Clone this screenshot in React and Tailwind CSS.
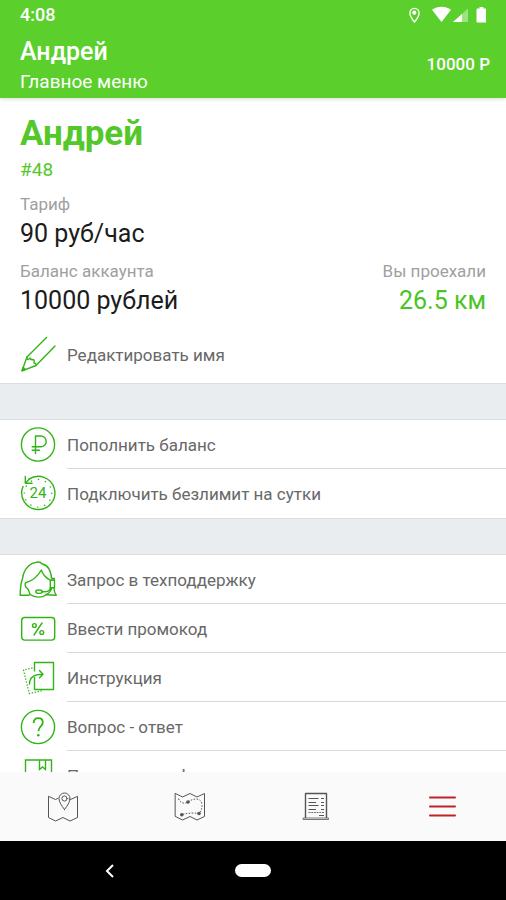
import React from 'react';

function Icon({ children, className = 'h-10 w-10 shrink-0 text-[#31b416]', box = '0 0 40 40' }) {
  return (
    <svg
      viewBox={box}
      className={className}
      fill="none"
      stroke="currentColor"
      strokeWidth="1.4"
      strokeLinecap="round"
      strokeLinejoin="round"
      aria-hidden="true"
    >
      {children}
    </svg>
  );
}

function PencilIcon() {
  return (
    <Icon>
      <path d="M28.500 2.500 9 22 4 35.800 18 30.500 37 11" />
      <path d="M9 22c-.5 2.500 1.500 3.500 3 1 .5 2.500 4 1.500 4 2 .8 1-.5 2.500 0 3 1.500-.3 2 .5 2 2.500" />
      <path d="M4 35.800l1.200-3.400 2.200 2.200z" fill="currentColor" />
    </Icon>
  );
}

function RubleIcon() {
  return (
    <Icon>
      <circle cx="20" cy="19.500" r="16.600" />
      <path d="M17.500 28.500V11h5.300a5.300 5.300 0 0 1 0 10.800H14.200M14.200 25.200h7.300" />
    </Icon>
  );
}

function DayIcon() {
  return (
    <Icon>
      <path d="M11 5.200A16.600 16.600 0 1 1 5 12.500" />
      <path d="M7.300 2.500v6.800h6.800M7.500 9l4.500-4.500" />
      <circle cx="20" cy="19.300" r="13.800" strokeDasharray=".2 7.026" />
      <text
        x="20"
        y="24"
        textAnchor="middle"
        className="fill-current font-[Roboto,sans-serif] text-[15px]"
        stroke="none"
      >
        24
      </text>
    </Icon>
  );
}

function SupportIcon() {
  return (
    <Icon>
      <path d="M11 35.300H2.200C2.200 29 2.800 24 4.300 19.300 5.500 11 8.500 6 14.300 3.300 17 2.800 18 2 20 2c1.800 0 3.300.8 4.300 2 4.500.8 8.400 5.500 9.400 14.700" />
      <path d="M12 34.500c-.8-3-1.500-5-2.700-6.200C7.500 27.500 6.300 24 7.700 22.700 14 21 19 17.500 23.300 10c1.200 4 4 7.500 8.700 10" />
      <path d="M12 34.500c5 3.500 12 3.500 16.300.3l10 .5C36.800 33.500 36 31 36 27.700" />
      <path d="M33.500 18.500h2.800v2M32.300 20.300h4.200v7.400h-4.200z" />
      <path d="M24.300 31.700c5 .5 7.700-.5 8-4M28 34.500c3-1 5-3.500 5.800-6.800" />
      <ellipse cx="21" cy="31.700" rx="3.200" ry="1.700" />
    </Icon>
  );
}

function PromoIcon() {
  return (
    <Icon>
      <rect x="3.700" y="8.500" width="33" height="22.600" rx="3" />
      <circle cx="16.400" cy="16.500" r="1.900" />
      <circle cx="23.800" cy="23.500" r="1.900" />
      <path d="m24 14-8 12" />
    </Icon>
  );
}

function GuideIcon() {
  return (
    <Icon>
      <path d="M16.500 13.500V4.500H35.500V31.500H16.500V19" strokeLinecap="butt" />
      <path d="M11.500 26c0-6 4.500-9.800 13-9.800M21.500 12.500l3.500 3.700-3.500 3.500" />
      <path d="M14 10 5.500 12l5.800 23.500L25 32.500" strokeDasharray=".2 2.800" />
    </Icon>
  );
}

function QuestionIcon() {
  return (
    <Icon>
      <circle cx="20" cy="20" r="16.600" />
      <path
        d="M15.700 16c0-3 1.800-4.800 4.600-4.800s4.500 1.700 4.500 4.300c0 3.800-4.400 4-4.400 8.700"
        strokeWidth="1.800"
        strokeLinecap="butt"
      />
      <circle cx="20.300" cy="28.200" r="1.300" fill="currentColor" stroke="none" />
    </Icon>
  );
}

function PolicyIcon() {
  return (
    <Icon>
      <path d="M7.500 4h26v33h-26zM21.500 4v9.500l3-2.500 3 2.500V4" strokeLinejoin="miter" />
    </Icon>
  );
}

function MapPinIcon() {
  return (
    <Icon box="0 0 32 32" className="h-8 w-8">
      <path
        d="M11 8.300 8.500 9.500 1.500 6.300V27.500L8.500 31l7.500-3.500 7 3.500 7.500-3.500V6.300L23.500 9.500 22 8.800"
        strokeWidth="1"
      />
      <path d="M17.500 19.500c-3-4-5.500-7.500-5.500-11a5.500 5.500 0 0 1 11 0c0 3.500-2.500 7-5.500 11z" strokeWidth="1" />
      <circle cx="17.500" cy="8.500" r="2.600" strokeWidth="1" />
    </Icon>
  );
}

function RouteIcon() {
  return (
    <Icon box="0 0 32 32" className="h-8 w-8">
      <path d="M1.500 3.500 8.500 7l7.500-3.500L23 7l7.500-3.500V26.500L23 30l-7-3.500L8.500 30l-7-3.500z" strokeWidth="1" />
      <path
        d="M4.500 8.500c1.500 5 6 5.500 9.500 3.500 7-5 13.500-3.500 14 2.500.3 4-1 6.500-3 9-4-.5-9-1-17 1"
        strokeDasharray="1.500 1.500"
        strokeWidth="1"
        strokeLinecap="butt"
      />
      <circle cx="14" cy="12" r="1.800" fill="currentColor" stroke="none" />
      <circle cx="25" cy="23.500" r="1.800" fill="currentColor" stroke="none" />
      <circle cx="7.800" cy="24.700" r="1.800" fill="currentColor" stroke="none" />
    </Icon>
  );
}

function ReceiptIcon() {
  return (
    <Icon box="0 0 32 32" className="h-8 w-8">
      <path d="M5.500 28V3.500H26.500V28" strokeLinecap="butt" />
      <path d="M3.500 28h25v1.500h-25z" strokeWidth=".8" />
      <path d="M8.500 8.500h10M21 8.500h3M8.500 12.500h7.500M21 12.500h3M8.500 15.500h10M21 15.500h3M8.500 19.500h7.500M21 19.500h3M19 25.500h5" strokeLinecap="butt" strokeWidth="1" />
      <path d="M8.500 22.500h15.500" strokeDasharray="2 .7" strokeLinecap="butt" strokeWidth=".8" />
    </Icon>
  );
}

function MenuIcon() {
  return (
    <Icon box="0 0 32 32" className="h-8 w-8 text-[#bf2228]">
      <path d="M3 7.500h25M3 16.500h25M3 25.500h25" strokeWidth="2" />
    </Icon>
  );
}

const sections = [
  [
    { icon: RubleIcon, label: 'Пополнить баланс' },
    { icon: DayIcon, label: 'Подключить безлимит на сутки' },
  ],
  [
    { icon: SupportIcon, label: 'Запрос в техподдержку' },
    { icon: PromoIcon, label: 'Ввести промокод' },
    { icon: GuideIcon, label: 'Инструкция' },
    { icon: QuestionIcon, label: 'Вопрос - ответ' },
    { icon: PolicyIcon, label: 'Политика конфиденциальности' },
  ],
];

const tabs = [
  { icon: MapPinIcon, label: 'Карта' },
  { icon: RouteIcon, label: 'Поездки' },
  { icon: ReceiptIcon, label: 'Счета' },
  { icon: MenuIcon, label: 'Меню', active: true },
];

function StatusBar() {
  return (
    <div className="flex h-[30px] items-center justify-between px-5">
      <span className="text-[18px] leading-5 font-medium">4:08</span>
      <svg viewBox="0 0 80 18" className="h-[18px] w-20" fill="currentColor" aria-hidden="true">
        <path
          d="M8.500 16C5.500 12.500 3.900 9.500 3.900 7a4.600 4.600 0 0 1 9.200 0c0 2.500-1.600 5.500-4.600 9z"
          fill="none"
          stroke="currentColor"
          strokeWidth="1.400"
        />
        <circle cx="8.300" cy="6.700" r="2.100" />
        <path d="M26 3.700C31.500-.2 39.500-.2 45 3.700L35.500 16z" />
        <path d="M62 2.500V16H47z" opacity=".4" />
        <path d="M56 7.900V16h-9z" />
        <path d="M73.500 1h4v1.500h2a1 1 0 0 1 1 1V15.500a1 1 0 0 1-1 1h-8a1 1 0 0 1-1-1V3.500a1 1 0 0 1 1-1h2z" />
      </svg>
    </div>
  );
}

function MenuRow({ item, last }) {
  const RowIcon = item.icon;
  return (
    <li>
      <button type="button" className="flex h-[49px] w-full items-center gap-[9px] pl-[18px] text-left">
        <RowIcon />
        <span
          className={`flex h-full flex-1 items-center border-b pt-0.5 text-[17px] leading-6 text-[#686868] ${
            last ? 'border-transparent' : 'border-[#d9d9d9]'
          }`}
        >
          {item.label}
        </span>
      </button>
    </li>
  );
}

export default function App() {
  return (
    <div className="flex h-screen flex-col bg-white font-[Roboto,sans-serif]">
      <header className="z-10 shrink-0 bg-[#5bd02d] text-white shadow-[0_1px_4px_rgba(0,0,0,0.15)]">
        <StatusBar />
        <div className="flex h-[68px] items-center justify-between pr-4 pl-5">
          <div className="pt-1">
            <p className="text-[25px] leading-8 font-medium">Андрей</p>
            <p className="text-[19px] leading-7">Главное меню</p>
          </div>
          <span className="text-[17px] leading-6 font-medium">10000 Р</span>
        </div>
      </header>

      <main className="min-h-0 flex-1 overflow-y-auto [scrollbar-width:none]">
        <section className="px-5 pt-4">
          <h1 className="text-[35px] leading-10 font-bold text-[#54c82a]">Андрей</h1>
          <p className="text-[19px] leading-8 text-[#54c82a]">#48</p>
          <dl className="mt-1">
            <div className="h-[67px]">
              <dt className="text-[17px] leading-7 text-[#a0a0a0]">Тариф</dt>
              <dd className="text-[25px] leading-8 text-[#1c1c1c]">90 руб/час</dd>
            </div>
            <div className="flex h-[67px] justify-between">
              <div>
                <dt className="text-[17px] leading-7 text-[#a0a0a0]">Баланс аккаунта</dt>
                <dd className="text-[25px] leading-8 text-[#1c1c1c]">10000 рублей</dd>
              </div>
              <div className="text-right">
                <dt className="text-[17px] leading-7 text-[#a0a0a0]">Вы проехали</dt>
                <dd className="text-[25px] leading-8 text-[#4ac41f]">26.5 км</dd>
              </div>
            </div>
          </dl>
        </section>
        <button type="button" className="mt-1.5 mb-1 flex h-[49px] w-full items-center gap-[9px] pl-[18px] text-left">
          <PencilIcon />
          <span className="text-[17px] leading-6 text-[#686868]">Редактировать имя</span>
        </button>

        {sections.map((items, i) => (
          <React.Fragment key={i}>
            <div className="h-[37px] border-y border-[#dcdfe1] bg-[#e9edf0]" />
            <ul>
              {items.map((item, n) => (
                <MenuRow key={item.label} item={item} last={n === items.length - 1} />
              ))}
            </ul>
          </React.Fragment>
        ))}
      </main>

      <nav className="grid h-[69px] shrink-0 grid-cols-4 bg-[#fafafa] pb-0.5">
        {tabs.map(({ icon: TabIcon, label, active }) => (
          <button
            key={label}
            type="button"
            aria-label={label}
            aria-current={active ? 'page' : undefined}
            className="flex items-center justify-center text-[#555555]"
          >
            <TabIcon />
          </button>
        ))}
      </nav>

      <div className="grid h-[59px] shrink-0 grid-cols-[1fr_36px_1fr] items-center bg-black text-white">
        <button type="button" aria-label="Назад" className="justify-self-center pr-4">
          <svg viewBox="0 0 16 16" className="h-4 w-4" fill="none" stroke="currentColor" strokeWidth="2" aria-hidden="true">
            <path d="M11 2 5 8l6 6" />
          </svg>
        </button>
        <button type="button" aria-label="Домой" className="h-[13px] rounded-full bg-white" />
      </div>
    </div>
  );
}
